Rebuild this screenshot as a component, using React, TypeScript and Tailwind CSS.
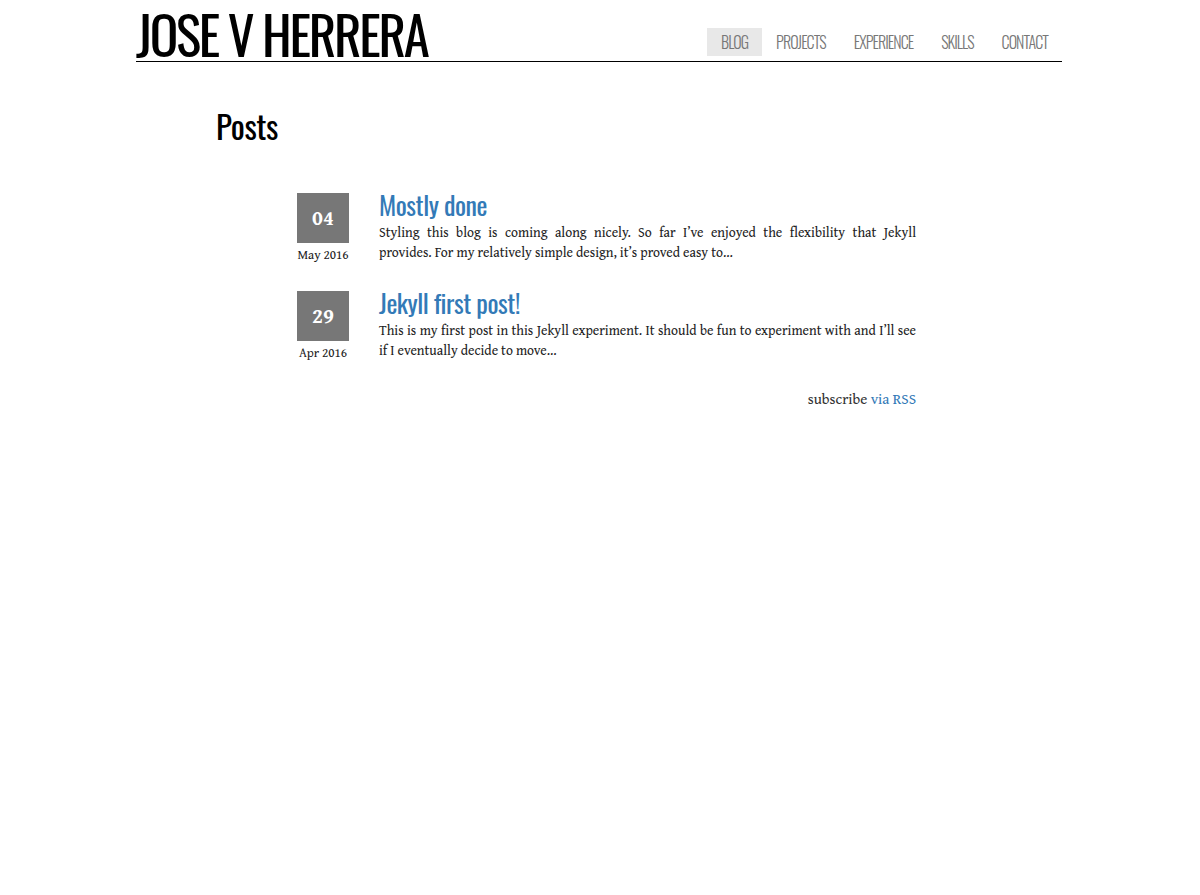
import React from "react";

const posts = [
  {
    day: "04",
    month: "May 2016",
    title: "Mostly done",
    lines: [
      "Styling this blog is coming along nicely. So far I\u2019ve enjoyed the flexibility that Jekyll",
      "provides. For my relatively simple design, it\u2019s proved easy to\u2026",
    ],
  },
  {
    day: "29",
    month: "Apr 2016",
    title: "Jekyll first post!",
    lines: [
      "This is my first post in this Jekyll experiment. It should be fun to experiment with and I\u2019ll see",
      "if I eventually decide to move\u2026",
    ],
  },
];

export default function App() {
  return (
    <div className="min-h-[895px] bg-white text-black font-['Gentium_Book_Basic','Gentium_Basic','Gentium_Book_Plus','Gentium_Plus','Liberation_Serif',serif]">
      <div className="pl-[136px]">
        <header className="w-[926px] flex items-end justify-between border-b border-black h-[62px]">
          <h1 className="text-[53px] leading-none font-['Oswald',sans-serif] font-normal tracking-[-2.3px] text-black pb-[1px]">
            JOSE V HERRERA
          </h1>
          <nav className="flex items-center mb-[5px]">
            {["BLOG", "PROJECTS", "EXPERIENCE", "SKILLS", "CONTACT"].map((n, i) => (
              <a
                key={n}
                className={`h-[28px] flex items-center px-[14px] text-[16px] tracking-[-0.93px] text-[#777] font-['Oswald',sans-serif] font-light ${
                  i === 0 ? "bg-[#e8e8e8]" : ""
                }`}
              >
                {n}
              </a>
            ))}
          </nav>
        </header>
      </div>

      <main className="pl-[216px] pt-[44px]">
        <h2 className="text-[33px] leading-[40px] font-['Oswald',sans-serif] font-normal tracking-[-0.4px] text-black">
          Posts
        </h2>
        <div className="pl-[81px] pt-[47px] w-[700px]">
          <ul className="flex flex-col gap-[24px]">
            {posts.map((p) => (
              <li key={p.day} className="flex gap-[30px]">
                <div className="w-[52px] flex flex-col items-center shrink-0">
                  <div className="w-[52px] h-[50px] bg-[#777] text-white font-bold text-[21px] flex items-center justify-center">
                    {p.day}
                  </div>
                  <div className="text-[13px] leading-[24px] whitespace-nowrap text-[#222]">{p.month}</div>
                </div>
                <div className="flex-1 -mt-[3px]">
                  <a className="block text-[26px] leading-[30px] tracking-[-0.45px] text-[#337ab7] font-['Oswald',sans-serif] font-normal">
                    {p.title}
                  </a>
                  <p className="text-[13.7px] leading-[20px] mt-[2px] text-[#222]">
                    <span className="block text-justify [text-align-last:justify] whitespace-nowrap">{p.lines[0]}</span>
                    <span className="block">{p.lines[1]}</span>
                  </p>
                </div>
              </li>
            ))}
          </ul>
          <p className="text-right text-[15px] mt-[23px] text-[#333]">
            subscribe <a className="text-[#337ab7]">via RSS</a>
          </p>
        </div>
      </main>
    </div>
  );
}
